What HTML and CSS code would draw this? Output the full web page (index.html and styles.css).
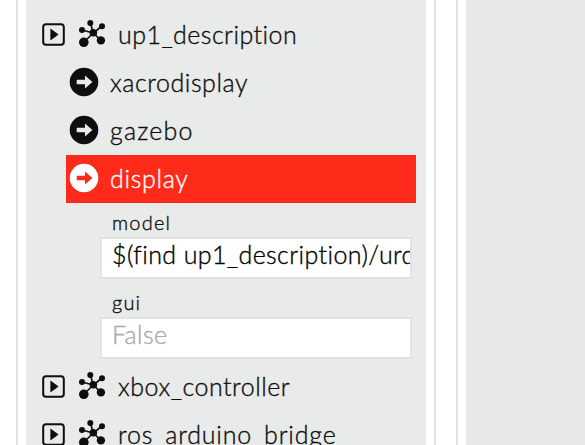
FILE: index.html
```
<!DOCTYPE html>
<html lang="en">
<head>
<meta charset="utf-8">
<title>Launch files</title>
<link rel="stylesheet" href="styles.css">
</head>
<body>
<svg class="defs" aria-hidden="true">
  <symbol id="play" viewBox="0 0 24 24"><rect x="1.2" y="1.2" width="20.6" height="20.6" rx="2.8" fill="none" stroke="currentColor" stroke-width="2"/><path d="M8.4 5.6L16.6 11.5L8.4 17.4Z" fill="currentColor"/></symbol>
  <symbol id="hub" viewBox="0 0 28 30"><path d="M15.3 15L12.3 5M15.3 15L24 8M15.3 15L4 12M15.3 15L6 24M15.3 15L23 22.5" stroke="currentColor" stroke-width="1.7"/><g fill="currentColor"><circle cx="15.3" cy="14.8" r="3.8"/><circle cx="12.3" cy="5" r="3"/><circle cx="24" cy="8.2" r="3"/><circle cx="4" cy="12" r="3"/><circle cx="5.8" cy="24.3" r="4.8"/><circle cx="22.9" cy="22.4" r="4.2"/></g></symbol>
  <symbol id="arrow" viewBox="0 0 30 30"><path fill="currentColor" fill-rule="evenodd" d="M15 .7A14.3 14.3 0 1 1 15 29.3A14.3 14.3 0 1 1 15 .7ZM7.7 12.8V17.2H16V21.4L23.4 15L16 8.6V12.8Z"/></symbol>
</svg>
<main class="workspace">
  <section class="tree-frame">
    <div class="tree">
      <div class="row package"><svg class="play"><use href="#play"/></svg><svg class="hub"><use href="#hub"/></svg><span class="label up1">up1_description</span></div>
      <div class="row launch"><svg class="arrow"><use href="#arrow"/></svg><span class="label xacro">xacrodisplay</span></div>
      <div class="row launch"><svg class="arrow"><use href="#arrow"/></svg><span class="label gazebo">gazebo</span></div>
      <div class="row launch selected"><svg class="arrow"><use href="#arrow"/></svg><span class="label display">display</span></div>
      <div class="param"><div class="name model">model</div><div class="field"><span class="value">$(find up1_description)/urd</span></div></div>
      <div class="param"><div class="name gui">gui</div><div class="field"><span class="value placeholder">False</span></div></div>
      <div class="row package"><svg class="play"><use href="#play"/></svg><svg class="hub"><use href="#hub"/></svg><span class="label xbox">xbox_controller</span></div>
      <div class="row package"><svg class="play"><use href="#play"/></svg><svg class="hub"><use href="#hub"/></svg><span class="label ros">ros_arduino_bridge</span></div>
    </div>
  </section>
  <section class="detail-frame"><div class="detail"></div></section>
</main>
</body>
</html>
```
FILE: styles.css
```
* { box-sizing: border-box; }
body { margin: 0; background: #fff; font-family: Lato, "Liberation Sans", sans-serif; font-weight: 300; color: #0d0e0e; overflow: hidden; }
.defs { display: none; }
.workspace { display: flex; gap: 20px; height: 445px; padding-left: 16px; overflow: hidden; }
.tree-frame { flex: none; width: 420px; padding: 0 8px; border: solid #e2e2e2; border-width: 0 2px; }
.tree { height: 100%; padding-top: 11px; background: #e9ebea; overflow: hidden; }
.detail-frame { flex: 1; padding-left: 8px; border-left: 2px solid #e2e2e2; }
.detail { height: 100%; background: #e8e8e8; }
.row { display: flex; align-items: flex-start; height: 48px; font-size: 25px; line-height: 46px; white-space: nowrap; }
.package { padding-left: 16px; }
.launch { margin: 0 10px 0 40px; padding-left: 3px; }
.selected { background: #ff2b1a; color: #fff; }
.play { flex: none; width: 24px; height: 24px; margin: 12px 12px 0 0; }
.hub { flex: none; width: 28px; height: 30px; margin: 7px 12px 0 0; }
.arrow { flex: none; width: 30px; height: 30px; margin: 8px 11px 0 0; }
.label, .name, .value { -webkit-text-stroke: 0.35px currentColor; }
.up1 { letter-spacing: 0.45px; }
.xacro { letter-spacing: 0.55px; }
.gazebo { letter-spacing: 1.2px; }
.display { letter-spacing: 0.7px; }
.xbox { letter-spacing: 0.5px; }
.ros { letter-spacing: 0.82px; }
.param { height: 80px; margin: 0 14px 0 74px; }
.name { height: 34px; padding-left: 12px; font-size: 20px; line-height: 38px; }
.model { letter-spacing: 1.2px; }
.gui { letter-spacing: 1.2px; }
.field { height: 42px; padding-left: 10px; border: 2px solid #e2e2e2; background: #fff; overflow: hidden; white-space: nowrap; font-size: 25px; line-height: 31px; color: #000; }
.value { letter-spacing: 0.39px; }
.placeholder { color: #a9aaa7; }
```
